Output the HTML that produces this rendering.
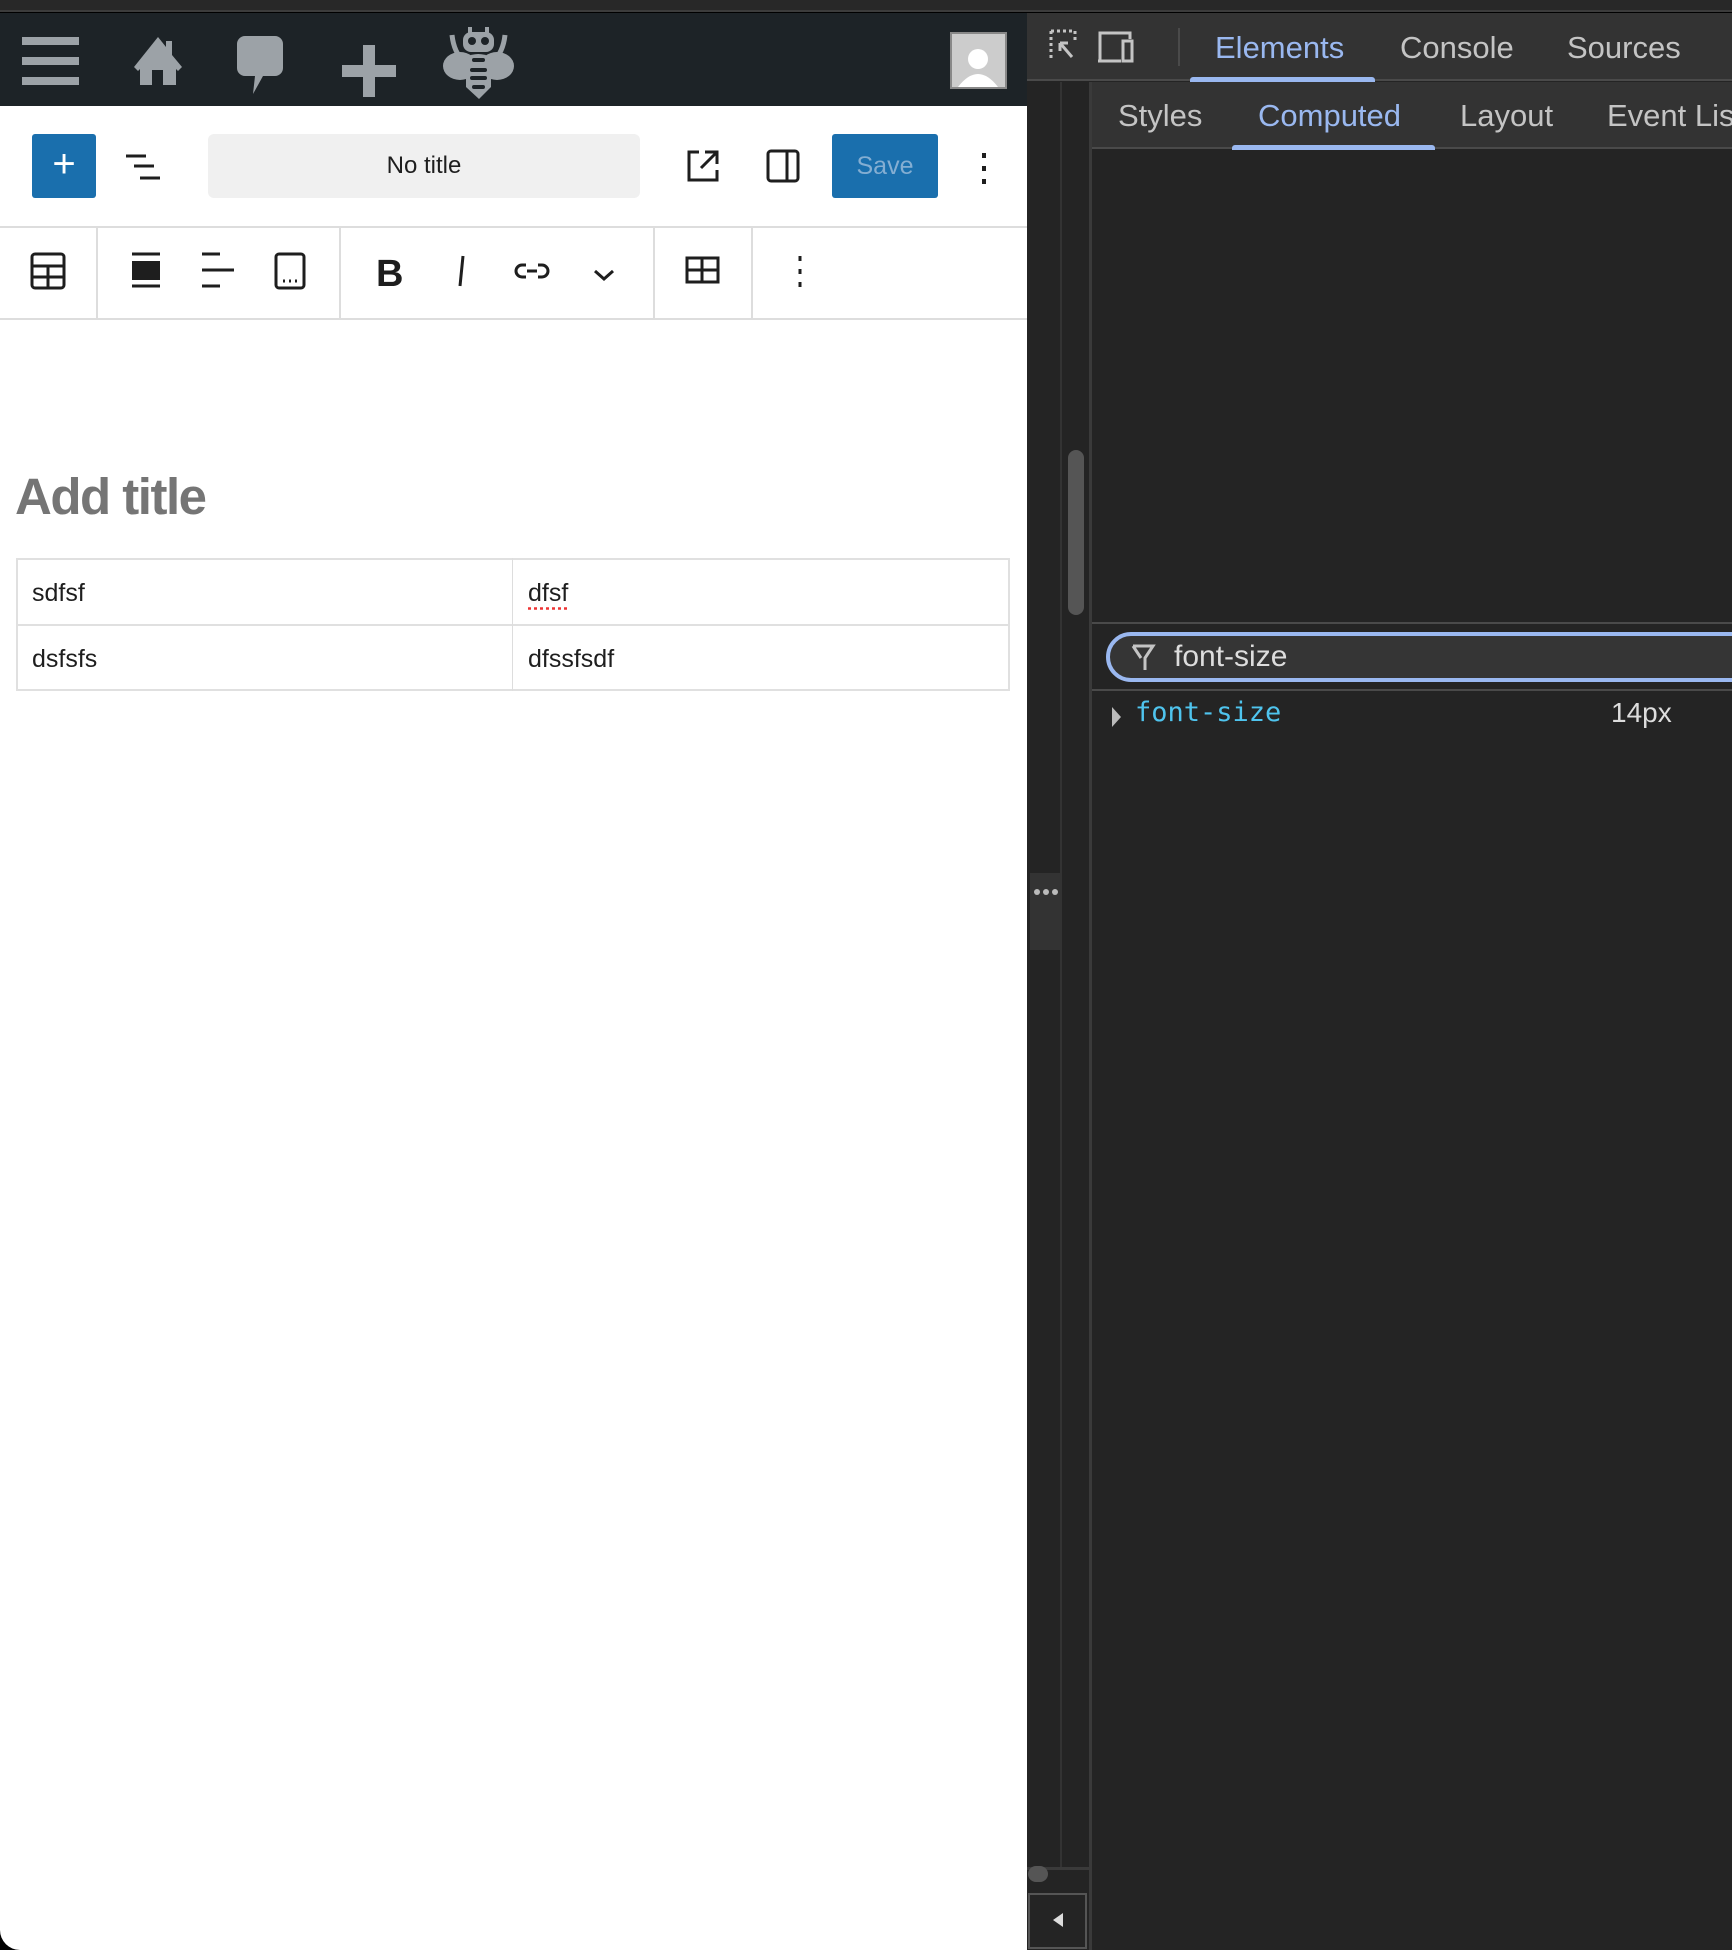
<!DOCTYPE html>
<html><head><meta charset="utf-8"><style>
*{box-sizing:border-box;margin:0;padding:0}
body{width:1732px;height:1950px;background:#000;position:relative;overflow:hidden;font-family:"Liberation Sans",sans-serif}
.a{position:absolute}
</style></head><body>
<div class="a" style="left:0;top:0;width:1732px;height:12px;background:#282828;border-bottom:2px solid #3c3c3c"></div>
<div class="a" style="left:0;top:13px;width:1027px;height:1937px;background:#fff;border-bottom-left-radius:20px;overflow:hidden">
 <div class="a" style="left:0;top:0;width:1027px;height:93px;background:#1d2327"></div>
 <svg class="a" style="left:0;top:0" width="1027" height="93" fill="#9ca2a7">
  <rect x="22" y="24" width="57" height="8"/><rect x="22" y="44" width="57" height="8"/><rect x="22" y="64" width="57" height="8"/>
  <path d="M158 24 L134 54 L138 58 L140 56 L140 72 L176 72 L176 56 L178 58 L182 54 L172 42 L172 28 L166 28 L166 34 Z M152 57 L163 57 L163 72 L152 72 Z" fill-rule="evenodd"/>
  <path d="M245 23 h30 a8 8 0 0 1 8 8 v24 a8 8 0 0 1 -8 8 h-12 l-10 18 l2 -18 h-10 a8 8 0 0 1 -8 -8 v-24 a8 8 0 0 1 8 -8z"/>
  <rect x="342" y="52" width="54" height="12"/><rect x="363" y="32" width="12" height="52"/>
  <path d="M452 22 q2 18 12 26 M505 22 q-2 18 -12 26" stroke="#9ca2a7" stroke-width="5" fill="none"/>
  <rect x="463" y="19" width="31" height="20" rx="8"/><rect x="468" y="14" width="4" height="8"/><rect x="485" y="14" width="4" height="8"/>
  <circle cx="472" cy="28" r="4" fill="#1d2327"/><circle cx="485" cy="28" r="4" fill="#1d2327"/>
  <ellipse cx="460" cy="53" rx="17" ry="14"/><ellipse cx="497" cy="53" rx="17" ry="14"/>
  <path d="M466 44 q12 -6 25 0 l0 30 l-12 12 l-13 -12z"/>
  <rect x="472" y="45" width="13" height="4" rx="2" fill="#1d2327"/><rect x="470" y="55" width="17" height="4" rx="2" fill="#1d2327"/><rect x="470" y="63" width="17" height="4" rx="2" fill="#1d2327"/><rect x="472" y="72" width="13" height="4" rx="2" fill="#1d2327"/>
  <rect x="951" y="20" width="55" height="55" fill="#ccc" stroke="#888" stroke-width="2"/>
  <circle cx="978" cy="46" r="10" fill="#fff"/><path d="M958 74 q20 -26 40 0z" fill="#fff"/>
 </svg>
 <div class="a" style="left:32px;top:121px;width:64px;height:64px;background:#1a6fad;border-radius:3px;color:#fff;font-size:40px;line-height:60px;text-align:center">+</div>
 <svg class="a" style="left:124px;top:140px" width="40" height="30" stroke="#1e1e1e" stroke-width="3"><path d="M2 3h20M10 13h20M16 25h20"/></svg>
 <div class="a" style="left:208px;top:121px;width:432px;height:64px;background:#f0f0f0;border-radius:6px;font-size:24px;line-height:64px;text-align:center;color:#1e1e1e">No title</div>
 <svg class="a" style="left:685px;top:135px" width="36" height="36" fill="none" stroke="#1e1e1e" stroke-width="3"><path d="M14 4H4v28h28V22M20 4h12v12M32 4L16 20"/></svg>
 <svg class="a" style="left:766px;top:136px" width="34" height="34" fill="none" stroke="#1e1e1e" stroke-width="3"><rect x="2" y="2" width="30" height="30" rx="3"/><path d="M21 2v30"/></svg>
 <div class="a" style="left:832px;top:121px;width:106px;height:64px;background:#1a6fad;border-radius:3px;color:#84aed2;font-size:25px;line-height:64px;text-align:center">Save</div>
 <svg class="a" style="left:980px;top:138px" width="8" height="40" fill="#1e1e1e"><rect x="2" y="2" width="4" height="5"/><rect x="2" y="15" width="4" height="5"/><rect x="2" y="28" width="4" height="5"/></svg>
 <div class="a" style="left:0;top:213px;width:1027px;height:2px;background:#ddd"></div>
 <div class="a" style="left:0;top:305px;width:1027px;height:2px;background:#ddd"></div>
 <div class="a" style="left:96px;top:213px;width:2px;height:92px;background:#ddd"></div>
 <div class="a" style="left:339px;top:213px;width:2px;height:92px;background:#ddd"></div>
 <div class="a" style="left:653px;top:213px;width:2px;height:92px;background:#ddd"></div>
 <div class="a" style="left:751px;top:213px;width:2px;height:92px;background:#ddd"></div>
 <svg class="a" style="left:0;top:199px" width="1027" height="92" fill="none" stroke="#1e1e1e" stroke-width="3">
  <rect x="32" y="42" width="32" height="34" rx="3"/><path d="M32 54h32M32 65h32M48 54v22"/>
  <path d="M132 42h28M132 74h28"/><rect x="132" y="49" width="28" height="19" fill="#1e1e1e" stroke="none"/>
  <path d="M202 42h18M202 58h32M202 74h18"/>
  <rect x="276" y="42" width="28" height="34" rx="3"/><path d="M283 69h2M289 69h2M295 69h2"/>
  <path d="M463 44l-3 30" stroke-width="3"/>
  <path d="M526 53h-4a6 6 0 0 0 0 12h4M538 53h4a6 6 0 0 1 0 12h-4M527 59h10"/>
  <path d="M595 59l9 8l9 -8"/>
  <rect x="687" y="46" width="31" height="24"/><path d="M687 58h31M702 46v24"/>
  <path d="M800 44v5M800 57v5M800 70v5"/>
 </svg>
 <div class="a" style="left:376px;top:240px;font-size:38px;font-weight:bold;color:#1e1e1e">B</div>
 <div class="a" style="left:15px;top:454px;font-size:51px;font-weight:bold;color:#757575;letter-spacing:-1.5px">Add title</div>
 <div class="a" style="left:16px;top:545px;width:994px;height:133px;border:2px solid #e0e0e0"></div>
 <div class="a" style="left:16px;top:611px;width:994px;height:2px;background:#e0e0e0"></div>
 <div class="a" style="left:512px;top:545px;width:1px;height:133px;background:#ddd"></div>
 <div class="a" style="left:32px;top:566px;font-size:25px;color:#1e1e1e">sdfsf</div>
 <div class="a" style="left:528px;top:566px;font-size:25px;color:#1e1e1e;text-decoration:underline dotted #e33;text-underline-offset:6px">dfsf</div>
 <div class="a" style="left:32px;top:632px;font-size:25px;color:#1e1e1e">dsfsfs</div>
 <div class="a" style="left:528px;top:632px;font-size:25px;color:#1e1e1e">dfssfsdf</div>
</div>
<div class="a" style="left:1027px;top:13px;width:705px;height:1937px;background:#242424"></div>
<div class="a" style="left:1027px;top:13px;width:705px;height:68px;background:#333;border-bottom:2px solid #4a4a4a"></div>
<svg class="a" style="left:1040px;top:25px" width="120" height="45" fill="none" stroke="#c4c4c4" stroke-width="3">
 <path d="M11 6v30M11 6h24M35 6v10" stroke-dasharray="3 3"/><path d="M20 18l12 14M20 18h8M20 18v8"/>
 <path d="M81 36H58M60 36V8h30v6"/><rect x="83" y="16" width="9" height="20"/>
</svg>
<div class="a" style="left:1178px;top:28px;width:2px;height:38px;background:#4a4a4a"></div>
<div class="a" style="left:1215px;top:30px;font-size:31px;color:#9ab8f0">Elements</div>
<div class="a" style="left:1190px;top:77px;width:185px;height:5px;background:#9ab8f0;border-radius:3px 3px 0 0"></div>
<div class="a" style="left:1400px;top:30px;font-size:31px;color:#c4c4c4">Console</div>
<div class="a" style="left:1567px;top:30px;font-size:31px;color:#c4c4c4">Sources</div>
<div class="a" style="left:1060px;top:82px;width:2px;height:1785px;background:#333"></div>
<div class="a" style="left:1089px;top:82px;width:3px;height:1868px;background:#3a3a3a"></div>
<div class="a" style="left:1068px;top:450px;width:16px;height:165px;background:#555;border-radius:8px"></div>
<div class="a" style="left:1030px;top:873px;width:32px;height:77px;background:#333"></div>
<svg class="a" style="left:1033px;top:888px" width="26" height="8" fill="#bbb"><circle cx="4" cy="4" r="3"/><circle cx="13" cy="4" r="3"/><circle cx="22" cy="4" r="3"/></svg>
<div class="a" style="left:1027px;top:1867px;width:63px;height:3px;background:#3a3a3a"></div>
<div class="a" style="left:1028px;top:1866px;width:20px;height:16px;background:#555;border-radius:8px"></div>
<div class="a" style="left:1028px;top:1893px;width:59px;height:56px;border:2px solid #555;background:#242424"></div>
<svg class="a" style="left:1050px;top:1910px" width="20" height="20" fill="#ddd"><path d="M3 10l10 -7v14z"/></svg>
<div class="a" style="left:1092px;top:82px;width:640px;height:67px;background:#333;border-bottom:2px solid #4a4a4a"></div>
<div class="a" style="left:1118px;top:98px;font-size:31px;color:#c4c4c4">Styles</div>
<div class="a" style="left:1258px;top:98px;font-size:31px;color:#9ab8f0">Computed</div>
<div class="a" style="left:1232px;top:145px;width:203px;height:5px;background:#9ab8f0;border-radius:3px 3px 0 0"></div>
<div class="a" style="left:1460px;top:98px;font-size:31px;color:#c4c4c4">Layout</div>
<div class="a" style="left:1607px;top:98px;font-size:31px;color:#c4c4c4;white-space:nowrap">Event Lis</div>
<div class="a" style="left:1092px;top:622px;width:640px;height:2px;background:#4a4a4a"></div>
<div class="a" style="left:1106px;top:632px;width:660px;height:50px;border:4px solid #9ab8f0;border-radius:25px;background:#353535"></div>
<svg class="a" style="left:1130px;top:643px" width="28" height="30" fill="none" stroke="#c4c4c4" stroke-width="3"><path d="M3 3h20l-8 12v12M11 15L3 3"/></svg>
<div class="a" style="left:1174px;top:640px;font-size:30px;color:#ddd">font-size</div>
<div class="a" style="left:1092px;top:689px;width:640px;height:2px;background:#4a4a4a"></div>
<svg class="a" style="left:1110px;top:705px" width="14" height="24" fill="#bbb"><path d="M2 2l9 10l-9 10z"/></svg>
<div class="a" style="left:1135px;top:697px;font-family:'DejaVu Sans Mono','Liberation Mono',monospace;font-size:27px;color:#4fc4ee">font-size</div>
<div class="a" style="left:1611px;top:697px;font-size:28px;color:#ddd">14px</div>
</body></html>
